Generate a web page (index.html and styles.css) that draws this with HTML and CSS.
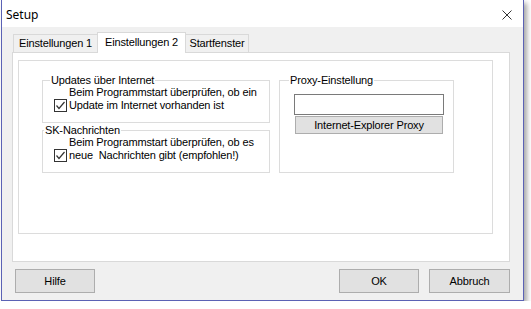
FILE: index.html
```html
<!DOCTYPE html>
<html lang="de">
<head>
    <meta charset="UTF-8">
    <title>Setup</title>
    <link rel="stylesheet" href="styles.css">
</head>
<body>
    <div class="window">
        <div class="titlebar">
            <span class="title">Setup</span>
            <svg class="close" width="10" height="10" viewBox="0 0 10 10">
                <path d="M0.5 0.5 L9.5 9.5 M9.5 0.5 L0.5 9.5" stroke="#333" stroke-width="1" fill="none"/>
            </svg>
        </div>
        <div class="client">
            <div class="tabs">
                <div class="tab tab-1">Einstellungen 1</div>
                <div class="tab tab-2 active">Einstellungen 2</div>
                <div class="tab tab-3">Startfenster</div>
            </div>
            <div class="tabpage">
                <div class="panel">
                    <div class="left-col">
                        <fieldset class="group">
                            <legend>Updates über Internet</legend>
                            <label class="check">
                                <span class="box">
                                    <svg width="11" height="11" viewBox="0 0 11 11">
                                        <path d="M1.5 5.5 L4 8.5 L9.5 2" stroke="#333" stroke-width="1.2" fill="none"/>
                                    </svg>
                                </span>
                                <span class="check-text">Beim Programmstart überprüfen, ob ein<br>Update im Internet vorhanden ist</span>
                            </label>
                        </fieldset>
                        <fieldset class="group group-sk">
                            <legend>SK-Nachrichten</legend>
                            <label class="check">
                                <span class="box">
                                    <svg width="11" height="11" viewBox="0 0 11 11">
                                        <path d="M1.5 5.5 L4 8.5 L9.5 2" stroke="#333" stroke-width="1.2" fill="none"/>
                                    </svg>
                                </span>
                                <span class="check-text">Beim Programmstart überprüfen, ob es<br>neue&nbsp; Nachrichten gibt (empfohlen!)</span>
                            </label>
                        </fieldset>
                    </div>
                    <fieldset class="group proxy">
                        <legend>Proxy-Einstellung</legend>
                        <input type="text" class="proxy-input">
                        <button type="button" class="proxy-btn">Internet-Explorer Proxy</button>
                    </fieldset>
                </div>
            </div>
            <div class="button-row">
                <button type="button" class="btn">Hilfe</button>
                <div class="spacer"></div>
                <button type="button" class="btn">OK</button>
                <button type="button" class="btn">Abbruch</button>
            </div>
        </div>
    </div>
</body>
</html>
```

FILE: styles.css
```css
body {
    margin: 0;
    padding-left: 1px;
    background: #ffffff;
    font-family: "Liberation Sans", Arial, sans-serif;
    font-size: 11px;
    letter-spacing: -0.15px;
    color: #000;
}
.window {
    width: 521px;
    height: 300px;
    border: 1px solid #5b62b5;
    border-top: none;
    background: #f0f0f0;
    box-shadow: 3px 3px 5px rgba(0, 0, 0, 0.35);
}
.titlebar {
    height: 27px;
    background: #fff;
    display: flex;
    align-items: center;
    justify-content: space-between;
    padding: 0 11px 0 4px;
}
.title {
    font-family: "Noto Sans", "Open Sans", sans-serif;
    font-size: 12px;
    letter-spacing: 0;
    color: #000;
    margin-top: 2px;
}
.close {
    margin-top: 2px;
}
.client {
    padding: 5px 13px 0 10px;
}
.tabs {
    display: flex;
    align-items: flex-end;
    height: 20px;
    padding-left: 1px;
}
.tab {
    height: 17px;
    line-height: 17px;
    border: 1px solid #d9d9d9;
    border-bottom: none;
    background: #f0f0f0;
    text-align: center;
}
.tab-1 {
    width: 83px;
    border-right: none;
}
.tab-3 {
    width: 62px;
    border-left: none;
}
.tab.active {
    width: 87px;
    height: 20px;
    line-height: 19px;
    background: #fff;
    margin-bottom: -1px;
    position: relative;
}
.tabpage {
    height: 201px;
    border: 1px solid #d9d9d9;
    background: #fff;
    padding: 7px 0 0 5px;
}
.panel {
    width: 475px;
    height: 174px;
    border: 1px solid #dcdcdc;
    display: flex;
    gap: 9px;
    padding: 13px 0 0 23px;
    box-sizing: border-box;
}
.left-col {
    width: 228px;
    display: flex;
    flex-direction: column;
    gap: 1px;
}
.group {
    margin: 0;
    padding: 0 0 0 7px;
    border: 1px solid #dcdcdc;
    min-width: 0;
    box-sizing: border-box;
}
.left-col .group {
    height: 49px;
}
.group legend {
    padding: 0 1px;
    line-height: 12px;
}
.group-sk legend {
    margin-left: -6px;
}
.check {
    display: flex;
    align-items: flex-end;
    margin: 0 0 0 4px;
}
.box {
    width: 11px;
    height: 11px;
    border: 1px solid #333;
    background: #fff;
    flex-shrink: 0;
    margin: 0 2px 0 0;
    display: flex;
}
.check-text {
    line-height: 13px;
}
.proxy {
    width: 175px;
    height: 99px;
    padding-left: 9px;
}
.proxy-input {
    display: block;
    width: 150px;
    height: 21px;
    margin: 8px 0 0 5px;
    border: 1px solid #7a7a7a;
    box-sizing: border-box;
    padding: 0;
}
.proxy-btn {
    display: block;
    width: 148px;
    height: 18px;
    margin: 1px 0 0 6px;
    padding: 0;
    border: 1px solid #adadad;
    background: #e1e1e1;
    font-family: "Liberation Sans", Arial, sans-serif;
    font-size: 11px;
    letter-spacing: -0.15px;
    color: #000;
}
.button-row {
    display: flex;
    gap: 10px;
    margin-top: 7px;
    padding-left: 3px;
}
.spacer {
    flex: 1;
}
.btn {
    width: 80px;
    height: 24px;
    padding: 0;
    border: 1px solid #adadad;
    background: #e1e1e1;
    font-family: "Liberation Sans", Arial, sans-serif;
    font-size: 11px;
    letter-spacing: -0.15px;
    color: #000;
}
.btn:last-child {
    width: 81px;
}
```
